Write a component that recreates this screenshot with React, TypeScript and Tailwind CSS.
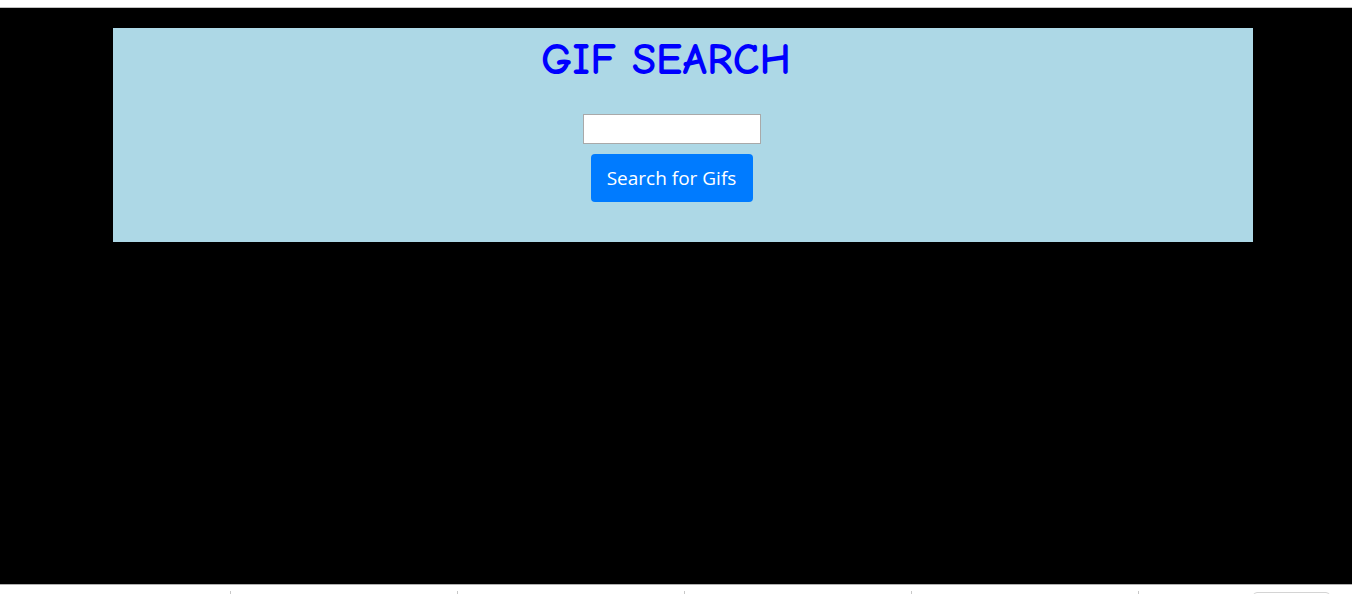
import React from 'react';

const App: React.FC = () => {
  const ticks = [230, 457, 684, 911, 1138];
  return (
    <div className="w-[1352px] h-[594px] bg-white overflow-hidden flex flex-col">
      <div className="h-[7px] bg-white" />
      <div className="h-[1px] bg-[#c0c0c0]" />
      <div className="h-[576px] bg-black pt-[20px] pl-[113px]">
        <div className="w-[1140px] h-[214px] bg-[#add8e6] pr-[23px] flex flex-col items-center">
          <h1
            className="text-[44px] leading-[48px] mt-[8px] mr-[11px] font-bold tracking-[0.2px] text-[#0000ff]"
            style={{ fontFamily: '"Comic Sans MS", "Comic Neue", cursive' }}
          >
            GIF SEARCH
          </h1>
          <input
            type="text"
            className="mt-[30px] w-[178px] h-[30px] bg-white border border-[#a9a9a9] outline-none"
          />
          <button
            className="mt-[10px] w-[162px] h-[48px] rounded-[4px] bg-[#007bff] text-white text-[19px] pt-[1px] font-['Open_Sans',sans-serif]"
          >
            Search for Gifs
          </button>
        </div>
      </div>
      <div className="h-[1px] bg-[#b0b0b0]" />
      <div className="relative flex-1 bg-white">
        {ticks.map((x) => (
          <div key={x} className="absolute top-[6px] w-[1px] h-[4px] bg-[#c8c8c8]" style={{ left: x }} />
        ))}
        <div className="absolute left-[1253px] top-[7px] w-[77px] h-[8px] rounded-t-[4px] border border-[#d4d4d4]" />
      </div>
    </div>
  );
};

export default App;
